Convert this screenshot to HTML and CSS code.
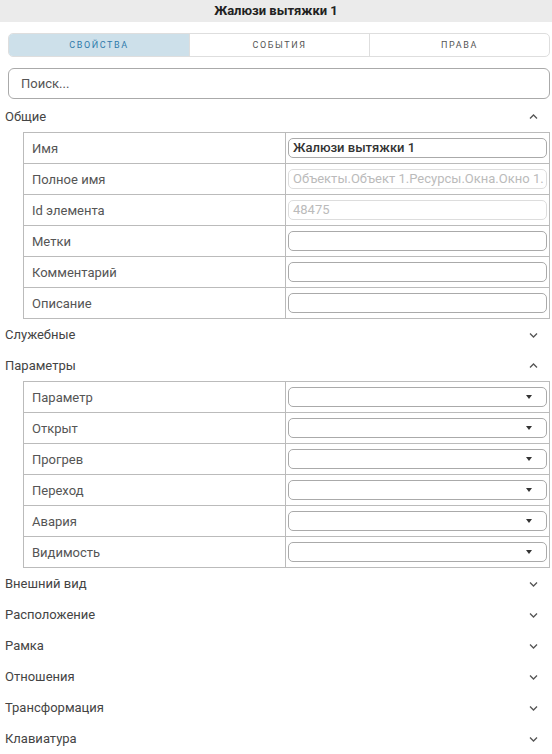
FILE: index.html
```html
<!DOCTYPE html>
<html lang="ru">
<head>
    <meta charset="UTF-8">
    <meta name="viewport" content="width=device-width, initial-scale=1.0">
    <title>Свойства</title>
    <link rel="stylesheet" href="styles.css">
</head>
<body>
    <div class="panel">
        <div class="title">Жалюзи вытяжки 1</div>

        <div class="tabs">
            <div class="tab active">Свойства</div>
            <div class="tab">События</div>
            <div class="tab">Права</div>
        </div>

        <div class="search">Поиск...</div>

        <!-- общие -->
        <div class="group-head">
            <span>Общие</span>
            <svg class="chev" width="9" height="6" viewBox="0 0 9 6"><path d="M1 4.5l3.5-3.5 3.5 3.5"/></svg>
        </div>
        <div class="props">
            <div class="row"><div class="label">Имя</div><div class="value"><div class="field strong">Жалюзи вытяжки 1</div></div></div>
            <div class="row"><div class="label">Полное имя</div><div class="value"><div class="field disabled">Объекты.Объект 1.Ресурсы.Окна.Окно 1.</div></div></div>
            <div class="row"><div class="label">Id элемента</div><div class="value"><div class="field disabled">48475</div></div></div>
            <div class="row"><div class="label">Метки</div><div class="value"><div class="field"></div></div></div>
            <div class="row"><div class="label">Комментарий</div><div class="value"><div class="field"></div></div></div>
            <div class="row"><div class="label">Описание</div><div class="value"><div class="field"></div></div></div>
        </div>

        <div class="group-head">
            <span>Служебные</span>
            <svg class="chev" width="9" height="6" viewBox="0 0 9 6"><path d="M1 1.5l3.5 3.5 3.5-3.5"/></svg>
        </div>

        <!-- параметры -->
        <div class="group-head">
            <span>Параметры</span>
            <svg class="chev" width="9" height="6" viewBox="0 0 9 6"><path d="M1 4.5l3.5-3.5 3.5 3.5"/></svg>
        </div>
        <div class="props">
            <div class="row"><div class="label">Параметр</div><div class="value"><div class="field select"><span class="caret"></span></div></div></div>
            <div class="row"><div class="label">Открыт</div><div class="value"><div class="field select"><span class="caret"></span></div></div></div>
            <div class="row"><div class="label">Прогрев</div><div class="value"><div class="field select"><span class="caret"></span></div></div></div>
            <div class="row"><div class="label">Переход</div><div class="value"><div class="field select"><span class="caret"></span></div></div></div>
            <div class="row"><div class="label">Авария</div><div class="value"><div class="field select"><span class="caret"></span></div></div></div>
            <div class="row"><div class="label">Видимость</div><div class="value"><div class="field select"><span class="caret"></span></div></div></div>
        </div>

        <div class="group-head">
            <span>Внешний вид</span>
            <svg class="chev" width="9" height="6" viewBox="0 0 9 6"><path d="M1 1.5l3.5 3.5 3.5-3.5"/></svg>
        </div>
        <div class="group-head">
            <span>Расположение</span>
            <svg class="chev" width="9" height="6" viewBox="0 0 9 6"><path d="M1 1.5l3.5 3.5 3.5-3.5"/></svg>
        </div>
        <div class="group-head">
            <span>Рамка</span>
            <svg class="chev" width="9" height="6" viewBox="0 0 9 6"><path d="M1 1.5l3.5 3.5 3.5-3.5"/></svg>
        </div>
        <div class="group-head">
            <span>Отношения</span>
            <svg class="chev" width="9" height="6" viewBox="0 0 9 6"><path d="M1 1.5l3.5 3.5 3.5-3.5"/></svg>
        </div>
        <div class="group-head">
            <span>Трансформация</span>
            <svg class="chev" width="9" height="6" viewBox="0 0 9 6"><path d="M1 1.5l3.5 3.5 3.5-3.5"/></svg>
        </div>
        <div class="group-head">
            <span>Клавиатура</span>
            <svg class="chev" width="9" height="6" viewBox="0 0 9 6"><path d="M1 1.5l3.5 3.5 3.5-3.5"/></svg>
        </div>
    </div>
</body>
</html>
```
FILE: styles.css
```css
body{
    margin: 0;
    background-color: #fff;
    font-family: Roboto, "Liberation Sans", sans-serif;
    font-size: 13px;
    color: #444;
}
.panel{
    width: 552px;
    overflow: hidden;
}
/* шапка */
.title{
    height: 22px;
    line-height: 22px;
    text-align: center;
    background-color: #ebebeb;
    font-weight: 700;
    color: #222;
}
/* вкладки */
.tabs{
    display: grid;
    grid-template-columns: 1fr 1fr 1fr;
    height: 22px;
    margin: 11px 2px 0 8px;
    border: 1px solid #dedede;
    border-radius: 5px;
    overflow: hidden;
}
.tab{
    display: flex;
    align-items: center;
    justify-content: center;
    font-size: 9px;
    letter-spacing: 1.6px;
    text-transform: uppercase;
    color: #555;
    border-left: 1px solid #dedede;
}
.tab:first-child{
    border-left: none;
}
.tab.active{
    background-color: #cde0ea;
    color: #2f7aab;
}
/* поиск */
.search{
    height: 31px;
    margin: 11px 2px 0 8px;
    padding-left: 12px;
    box-sizing: border-box;
    border: 1px solid #aaa;
    border-radius: 6px;
    line-height: 29px;
    color: #555;
}
.search + .group-head{
    margin-top: 2px;
}
/* группы */
.group-head{
    display: flex;
    align-items: center;
    justify-content: space-between;
    height: 31px;
    padding: 0 14px 0 5px;
    color: #444;
}
.chev{
    fill: none;
    stroke: #555;
    stroke-width: 1.3;
}
/* таблица свойств */
.props{
    margin: 0 2px 0 23px;
    border: 1px solid #bbb;
}
.row{
    display: grid;
    grid-template-columns: 262px 1fr;
    height: 30px;
    border-top: 1px solid #bbb;
}
.row:first-child{
    border-top: none;
}
.label{
    display: flex;
    align-items: center;
    padding-left: 8px;
    border-right: 1px solid #bbb;
    color: #555;
}
.value{
    display: flex;
    align-items: center;
    padding: 0 2px;
}
.field{
    flex: 1;
    height: 20px;
    box-sizing: border-box;
    border: 1px solid #aaa;
    border-radius: 5px;
    padding-left: 4px;
    line-height: 18px;
    white-space: nowrap;
    overflow: hidden;
}
.field.strong{
    font-weight: 500;
    color: #333;
}
.field.disabled{
    border-color: #ddd;
    color: #bbb;
}
.field.select{
    display: flex;
    align-items: center;
    justify-content: flex-end;
    padding-right: 14px;
}
.caret{
    width: 0;
    height: 0;
    border-left: 3.5px solid transparent;
    border-right: 3.5px solid transparent;
    border-top: 4px solid #333;
}
```
